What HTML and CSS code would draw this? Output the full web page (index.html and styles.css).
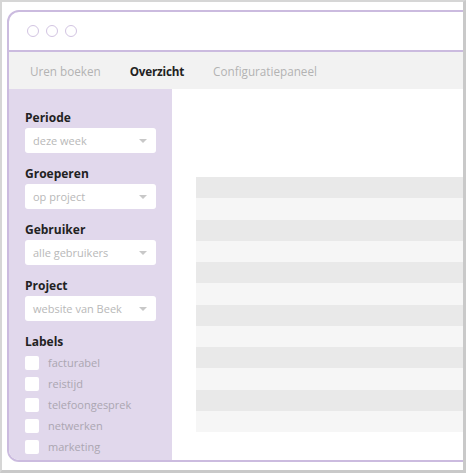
FILE: index.html
```html
<!DOCTYPE html>
<html lang="nl">
<head>
    <meta charset="UTF-8">
    <meta name="viewport" content="width=device-width, initial-scale=1.0">
    <title>Overzicht</title>
    <link rel="stylesheet" href="styles.css">
</head>
<body>
    <div class="frame">
        <div class="window">
            <div class="titlebar">
                <span class="dot"></span>
                <span class="dot"></span>
                <span class="dot"></span>
            </div>

            <nav class="tabs">
                <a class="tab">Uren boeken</a>
                <a class="tab active">Overzicht</a>
                <a class="tab">Configuratiepaneel</a>
            </nav>

            <div class="content">
                <aside class="sidebar">
                    <div class="field">
                        <label>Periode</label>
                        <div class="select">deze week</div>
                    </div>
                    <div class="field">
                        <label>Groeperen</label>
                        <div class="select">op project</div>
                    </div>
                    <div class="field">
                        <label>Gebruiker</label>
                        <div class="select">alle gebruikers</div>
                    </div>
                    <div class="field">
                        <label>Project</label>
                        <div class="select">website van Beek</div>
                    </div>

                    <label>Labels</label>
                    <ul class="checks">
                        <li><span class="box"></span>facturabel</li>
                        <li><span class="box"></span>reistijd</li>
                        <li><span class="box"></span>telefoongesprek</li>
                        <li><span class="box"></span>netwerken</li>
                        <li><span class="box"></span>marketing</li>
                    </ul>
                </aside>

                <main class="main">
                    <div class="table">
                        <div class="row"></div>
                        <div class="row"></div>
                        <div class="row"></div>
                        <div class="row"></div>
                        <div class="row"></div>
                        <div class="row"></div>
                        <div class="row"></div>
                        <div class="row"></div>
                        <div class="row"></div>
                        <div class="row"></div>
                        <div class="row"></div>
                        <div class="row"></div>
                    </div>
                </main>
            </div>
        </div>
    </div>
</body>
</html>
```

FILE: styles.css
```css
html, body {
    margin: 0;
    padding: 0;
}
body {
    font-family: "Open Sans", "Liberation Sans", sans-serif;
    background: #fff;
}
.frame {
    box-sizing: border-box;
    width: 466px;
    height: 473px;
    border-top: 2px solid #d6d6d6;
    border-left: 2px solid #d6d6d6;
    border-right: 3px solid #c9c9c9;
    border-bottom: 3px solid #c9c9c9;
    padding: 8px 0 0 5px;
    overflow: hidden;
}
.window {
    box-sizing: border-box;
    width: 480px;
    height: 452px;
    border: 2px solid #cbbbdf;
    border-radius: 12px;
    overflow: hidden;
    display: flex;
    flex-direction: column;
}
.titlebar {
    height: 38px;
    border-bottom: 2px solid #cbbbdf;
    display: flex;
    align-items: center;
    gap: 7px;
    padding-left: 18px;
    flex-shrink: 0;
}
.dot {
    box-sizing: border-box;
    width: 12px;
    height: 12px;
    border: 1.5px solid #d2c4e2;
    border-radius: 50%;
}
.tabs {
    height: 37px;
    background: #f2f2f2;
    display: flex;
    align-items: center;
    gap: 29px;
    padding-left: 21px;
    flex-shrink: 0;
}
.tab {
    font-size: 11.7px;
    color: #b3b3b3;
}
.tab.active {
    color: #222;
    font-weight: bold;
    letter-spacing: -0.2px;
}
.content {
    flex: 1;
    display: flex;
}
.sidebar {
    width: 163px;
    background: #e1d8ec;
    padding: 21px 16px 0 16px;
    box-sizing: border-box;
}
.sidebar label {
    display: block;
    font-size: 12px;
    font-weight: bold;
    color: #222;
    line-height: 16px;
}
.field {
    margin-bottom: 13px;
}
.select {
    position: relative;
    margin-top: 2px;
    height: 25px;
    line-height: 25px;
    background: #fff;
    border-radius: 3px;
    padding-left: 8px;
    font-size: 11px;
    color: #b8b8b8;
}
.select::after {
    content: "";
    position: absolute;
    right: 9px;
    top: 11px;
    border-left: 4px solid transparent;
    border-right: 4px solid transparent;
    border-top: 4px solid #c8c8c8;
}
.checks {
    list-style: none;
    margin: 2px 0 0 0;
    padding: 0;
}
.checks li {
    height: 21px;
    display: flex;
    align-items: center;
    font-size: 11px;
    color: #aba6b1;
}
.box {
    width: 14px;
    height: 14px;
    background: #fff;
    border-radius: 2px;
    margin-right: 9px;
}
.main {
    flex: 1;
    padding: 88px 0 0 24px;
}
.row {
    height: 21.25px;
    background: #f6f6f6;
}
.row:nth-child(odd) {
    background: #e9e9e9;
}
```
